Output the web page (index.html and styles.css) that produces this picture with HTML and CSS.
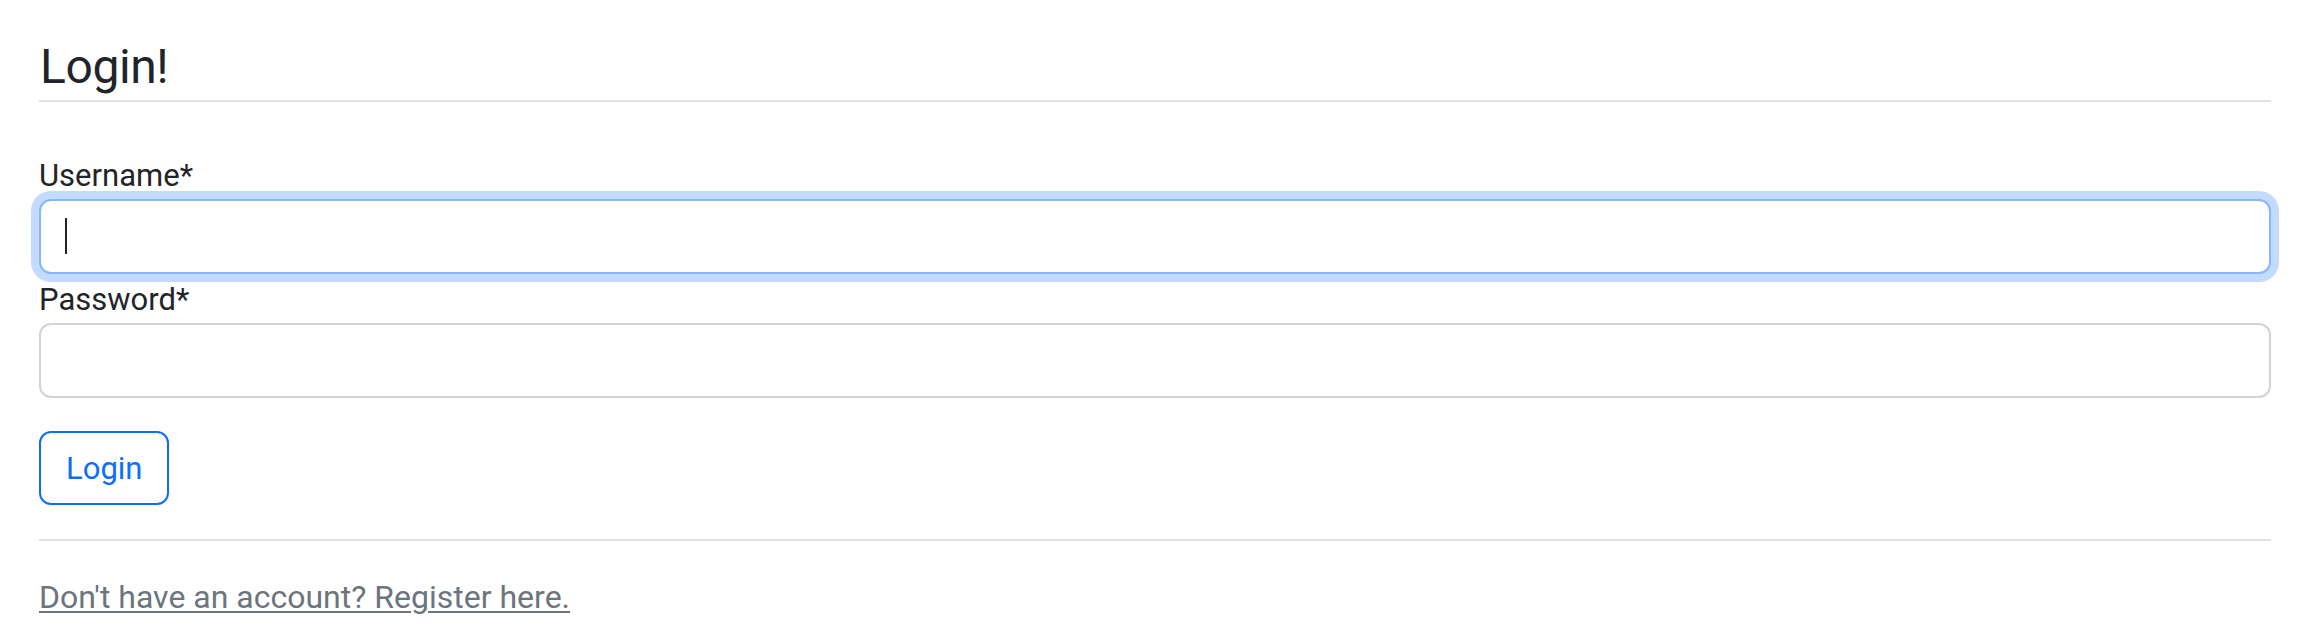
FILE: index.html
```html
<!DOCTYPE html>
<html lang="en">
<head>
<meta charset="utf-8">
<title>Login</title>
<link rel="stylesheet" href="styles.css">
</head>
<body>
<main class="page">
  <h3 class="title">Login!</h3>
  <hr class="rule rule-top">
  <form class="login-form">
    <div class="field">
      <label class="field-label" for="username">Username*</label>
      <div class="input-wrap">
        <input class="form-control is-focused" id="username" type="text" name="username">
        <span class="caret"></span>
      </div>
    </div>
    <div class="field">
      <label class="field-label" for="password">Password*</label>
      <input class="form-control" id="password" type="password" name="password">
    </div>
    <button class="btn-outline" type="button">Login</button>
  </form>
  <hr class="rule rule-bottom">
  <p class="register"><a class="register-link" href="#">Don't have an account? Register here.</a></p>
</main>
</body>
</html>
```

FILE: styles.css
```css
* { box-sizing: border-box; }

html, body {
  margin: 0;
  padding: 0;
  background: #fff;
}

body {
  font-family: Roboto, "Liberation Sans", sans-serif;
  color: #212529;
  font-size: 31px;
}

.page {
  padding: 37px 44px 0 39px;
}

.title {
  margin: 0;
  font-size: 48px;
  line-height: 59px;
  font-weight: 400;
  letter-spacing: -0.4px;
  color: #212529;
  padding-left: 1px;
}

.rule {
  border: 0;
  height: 2px;
  background: #dee2e6;
  margin: 0;
}

.rule-top {
  margin-top: 4px;
}

.login-form {
  margin-top: 55px;
  display: flex;
  flex-direction: column;
}

.field {
  display: flex;
  flex-direction: column;
}

.field + .field {
  margin-top: 7px;
}

.field-label {
  font-size: 31px;
  line-height: 37px;
  margin-bottom: 5px;
}

.input-wrap {
  position: relative;
}

.form-control {
  display: block;
  width: 100%;
  height: 75px;
  padding: 0 24px;
  font: inherit;
  color: #212529;
  background: #fff;
  border: 2px solid #ced4da;
  border-radius: 12px;
  outline: none;
}

.form-control.is-focused {
  border-color: #86b7fe;
  box-shadow: 0 0 0 8px #c2dbfe;
}

.caret {
  position: absolute;
  left: 26px;
  top: 19px;
  width: 2px;
  height: 36px;
  background: #212529;
}

.btn-outline {
  align-self: flex-start;
  margin-top: 33px;
  height: 74px;
  padding: 0 25px;
  font-family: inherit;
  font-size: 31px;
  color: #0d6efd;
  background: #fff;
  border: 2px solid #0d6efd;
  border-radius: 12px;
  cursor: pointer;
}

.rule-bottom {
  margin-top: 34px;
}

.register {
  margin: 38px 0 0;
  font-size: 32px;
  line-height: 37px;
}

.register-link {
  color: #6c757d;
  text-decoration: underline;
  text-decoration-thickness: 2px;
  text-underline-offset: 3px;
}
```
